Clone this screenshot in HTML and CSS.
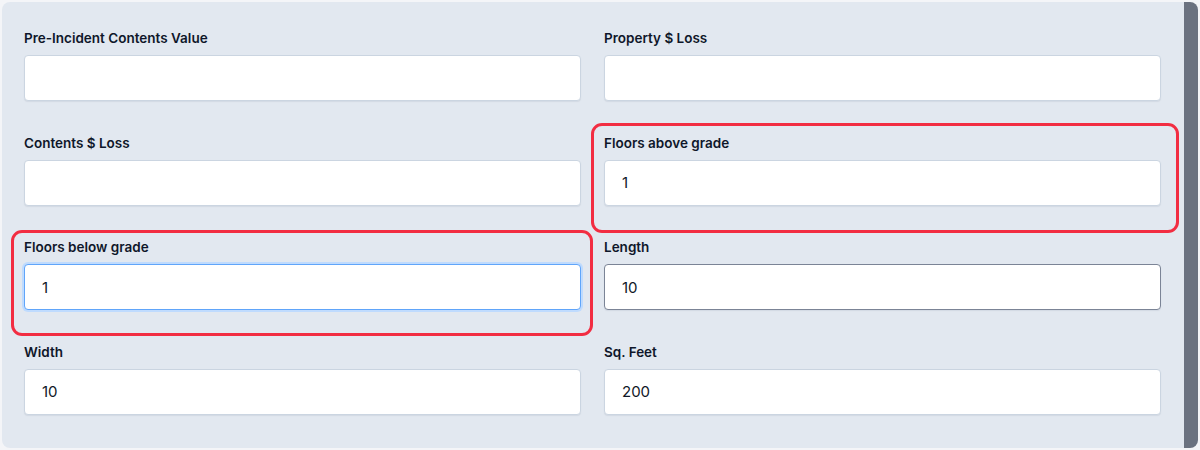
FILE: index.html
```html
<!DOCTYPE html>
<html>
<head>
  <title>Building details</title>
  <link rel="stylesheet" href="styles.css">
</head>
<body>
  <div class="panel">
    <div class="fields">
      <div class="field">
        <label for="preValue">Pre-Incident Contents Value</label>
        <input type="text" id="preValue">
      </div>
      <div class="field">
        <label for="propLoss">Property $ Loss</label>
        <input type="text" id="propLoss">
      </div>
      <div class="field">
        <label for="contLoss">Contents $ Loss</label>
        <input type="text" id="contLoss">
      </div>
      <div class="field">
        <label for="floorsAbove">Floors above grade</label>
        <input type="text" id="floorsAbove" value="1">
      </div>
      <div class="field">
        <label for="floorsBelow">Floors below grade</label>
        <input type="text" id="floorsBelow" class="focused" value="1">
      </div>
      <div class="field">
        <label for="length">Length</label>
        <input type="text" id="length" class="hovered" value="10">
      </div>
      <div class="field">
        <label for="width">Width</label>
        <input type="text" id="width" value="10">
      </div>
      <div class="field">
        <label for="sqFeet">Sq. Feet</label>
        <input type="text" id="sqFeet" value="200">
      </div>
    </div>

    <!-- пометки -->
    <div class="mark mark-above"></div>
    <div class="mark mark-below"></div>
  </div>
</body>
</html>
```

FILE: styles.css
```css
/* Стили страницы */
body {
  margin: 0;
  padding: 2px;
  background: #f4f5f8;
  font-family: 'Inter', 'Noto Sans', sans-serif;
  color: #111827;
}
.panel {
  position: relative;
  height: 446px;
  box-sizing: border-box;
  padding: 26px 24px 0 22px;
  background: #e2e8f0;
  border-right: 14px solid #6b7280;
  border-radius: 8px;
}
.fields {
  display: grid;
  grid-template-columns: 557px 557px;
  column-gap: 23px;
  row-gap: 31.67px;
}
.field {
  display: flex;
  flex-direction: column;
}
label {
  font-size: 13.5px;
  font-weight: 600;
  line-height: 20px;
  margin-bottom: 7px;
  color: #0f172a;
}
input {
  height: 46px;
  box-sizing: border-box;
  padding: 0 17px;
  font-family: 'Inter', 'Noto Sans', sans-serif;
  font-size: 15px;
  color: #111827;
  background: #fff;
  border: 1px solid #cbd5e1;
  border-radius: 4px;
  box-shadow: 0 1px 1px rgba(100, 116, 139, 0.12);
  outline: none;
}
input.focused {
  border-color: #60a5fa;
  box-shadow: 0 0 0 2px #bfdbfe;
}
input.hovered {
  border-color: #7b8496;
}
/* Красные рамки */
.mark {
  position: absolute;
  border: 3px solid #f22d42;
  border-radius: 11px;
  pointer-events: none;
}
.mark-above {
  left: 589px;
  top: 121px;
  width: 582px;
  height: 104px;
}
.mark-below {
  left: 9px;
  top: 228px;
  width: 576px;
  height: 100px;
}
```
